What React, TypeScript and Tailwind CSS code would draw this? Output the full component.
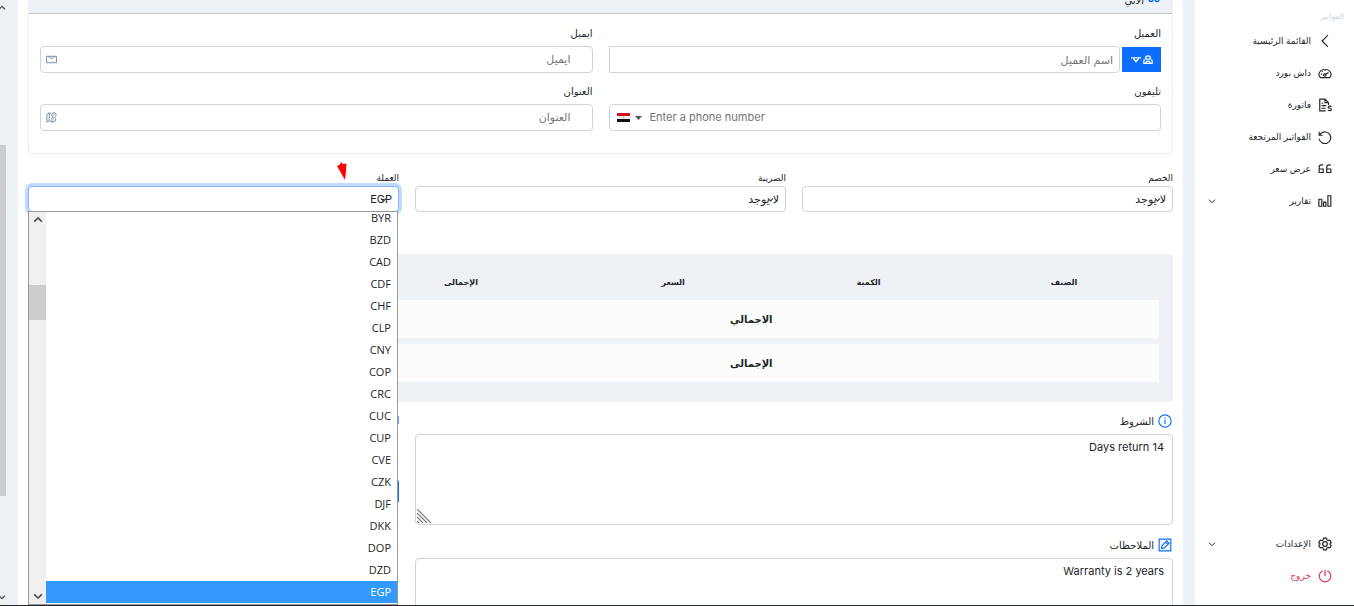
import type { ReactNode } from 'react'

const currencies = [
  'BYR', 'BZD', 'CAD', 'CDF', 'CHF', 'CLP', 'CNY', 'COP', 'CRC',
  'CUC', 'CUP', 'CVE', 'CZK', 'DJF', 'DKK', 'DOP', 'DZD', 'EGP'
]

const iconPaths = {
  back: <path d="M17 2 7 12l10 10" />,
  dashboard: (
    <>
      <path d="M4 20a10.500 8.500 0 1 1 16 0z" />
      <path d="m12 15 6-4M5 14h2M7 9l1 1M12 7v1.500" />
      <circle cx="11.500" cy="15.500" r="2" />
    </>
  ),
  invoice: (
    <>
      <path d="M13 22H3V2h9l6 6v4M12 2v6h6M6 9h3M6 13h8M6 17.500h7" />
      <path d="M23 15c-1-1.500-5.500-1.500-5.500.8 0 2.400 5.500 1.200 5.500 3.900 0 2.600-4.500 2.500-6 .8" />
    </>
  ),
  returns: <path d="M2 3v6h6M2.500 9 5 6a10 10 0 1 1-3 9" />,
  quote: (
    <>
      <path d="M9 5H6a4 4 0 0 0-4 4v9h7v-6H2" />
      <path d="M22 5h-3a4 4 0 0 0-4 4v9h7v-6h-7" />
    </>
  ),
  reports: <path d="M1.500 9h5v12h-5zM9.500 14h4v7h-4zM17 3h5v18h-5z" />,
  settings: (
    <>
      <path d="m9.500 2-.7 3.100-2 1.200-3-1L1.300 9.600 3.700 12l-2.400 2.400 2.500 4.300 3-1 2 1.200.7 3.100h5l.7-3.100 2-1.200 3 1 2.500-4.300L20.300 12l2.400-2.400-2.500-4.300-3 1-2-1.200-.7-3.100z" />
      <circle cx="12" cy="12" r="4" />
    </>
  ),
  power: <path d="M12 1.500V12M8 3a10 10 0 1 0 8 0" />,
  chevron: <path d="m3 8 9 9 9-9" />,
  up: <path d="m3 16 9-9 9 9" />,
  mail: <path d="M1 5h22v14H1zM6 5c1 6 11 6 12 0" />,
  map: (
    <>
      <path d="M12 4 7 2 2 5v17l5-3 6 3 8-3v-5M7 2v17M13 12v10" />
      <path d="M17 14c-3-3-4-5-4-8a4 4 0 0 1 9 0c0 3-2 5-5 8zM16 6h3" />
    </>
  ),
  info: (
    <>
      <circle cx="12" cy="12" r="10.500" />
      <path d="M12 10v7M12 6v2" />
    </>
  ),
  edit: <path d="M2 2h20v20H2zM6 18l1-5 8-8 4 4-8 8zM13 7l4 4" />,
  customer: (
    <>
      <path d="M6 10V8a6 6 0 0 1 12 0v2M6 10h12" />
      <path d="M4 11a4 4 0 0 0-2 4v5h20v-5a4 4 0 0 0-2-4M8 20v-5h8v5" />
    </>
  ),
  triangle: <path d="M0 7h24M6 9l6 7 6-7" />,
  people: (
    <>
      <circle cx="6" cy="15" r="4" />
      <circle cx="18" cy="15" r="4" />
      <path d="M6 11V5h3M18 11V5h-3M10 14h4" />
    </>
  )
}

type IconName = keyof typeof iconPaths

const Icon = ({ name, className = 'size-3.5 stroke-2' }: { name: IconName; className?: string }) => (
  <svg
    viewBox="0 0 24 24"
    fill="none"
    stroke="currentColor"
    className={`shrink-0 ${className}`}
    aria-hidden="true"
  >
    {iconPaths[name]}
  </svg>
)

const NavItem = ({ icon, label, expandable, danger }: {
  icon: IconName
  label: string
  expandable?: boolean
  danger?: boolean
}) => (
  <a
    href="#"
    className={`flex h-8 items-center gap-[7px] pr-[22px] pl-[13px] text-[9px] ${danger ? 'text-[#dc3557]' : 'text-[#212529]'}`}
  >
    <Icon name={icon} />
    <span className="flex-1 whitespace-nowrap">{label}</span>
    {expandable && <Icon name="chevron" className="size-2 stroke-3" />}
  </a>
)

const Field = ({ id, label, children }: { id: string; label: string; children: ReactNode }) => (
  <div className="flex flex-col gap-[6px]">
    <label htmlFor={id} className="text-[10px] leading-[13px]">{label}</label>
    {children}
  </div>
)

const IconInput = ({ id, icon, placeholder }: { id: string; icon: IconName; placeholder: string }) => (
  <div className="flex h-[27px] items-center rounded border border-[#ced4da] pr-[21px] pl-[5px]">
    <input
      id={id}
      type="text"
      placeholder={placeholder}
      className="min-w-0 flex-1 text-[11px] outline-none placeholder:text-[#757575]"
    />
    <Icon name={icon} className="size-[11px] stroke-2 text-[#6b83a0]" />
  </div>
)

const SelectField = ({ id, label, options, focused, children }: {
  id: string
  label: string
  options: string[]
  focused?: boolean
  children?: ReactNode
}) => (
  <div>
    <label htmlFor={id} className="block text-[9px] leading-[14px]">{label}</label>
    <div className="relative mt-px">
      <select
        id={id}
        defaultValue={options[options.length - 1]}
        className={`block h-[26px] w-full appearance-none rounded border bg-white px-1.5 text-[11px] outline-none ${
          focused ? 'border-[#86b7fe] ring-3 ring-[#c2dbfe]' : 'border-[#ced4da]'
        }`}
      >
        {options.map(option => <option key={option}>{option}</option>)}
      </select>
      <Icon name="chevron" className="pointer-events-none absolute top-2.5 right-3 size-[7px] stroke-4 text-[#343a40]" />
      {children}
    </div>
  </div>
)

const CurrencyList = () => (
  <div className="absolute top-[25px] right-px left-0 z-10 flex h-[394px] border border-[#999] bg-white">
    <ul
      role="listbox"
      aria-label="العملة"
      className="flex flex-1 flex-col justify-end overflow-hidden pb-px font-['Open_Sans',sans-serif] text-[11px]"
    >
      {currencies.map(code => (
        <li
          key={code}
          role="option"
          aria-selected={code === 'EGP'}
          className="h-[22px] shrink-0 px-1.5 leading-[22px] aria-selected:bg-[#3399ff] aria-selected:text-white"
        >
          {code}
        </li>
      ))}
    </ul>
    <div className="flex w-[17px] flex-col items-center bg-[#f0f0f0] text-[#505050]">
      <Icon name="up" className="my-[3px] size-2.5 stroke-4" />
      <div className="mt-[57px] h-[35px] w-full bg-[#cdcdcd]" />
      <Icon name="chevron" className="mt-auto mb-[3px] size-2.5 stroke-4" />
    </div>
  </div>
)

const NoteBox = ({ id, icon, label, text }: { id: string; icon: IconName; label: string; text: string }) => (
  <div>
    <label htmlFor={id} className="flex h-[26px] items-center gap-1 pr-px text-[10px]">
      <Icon name={icon} className="size-3.5 stroke-2 text-[#0d6efd]" />
      {label}
    </label>
    <div className="relative">
      <textarea
        id={id}
        defaultValue={text}
        className="block h-[91px] w-full resize-none rounded border border-[#ced4da] px-2 py-1 text-[11px] leading-4 outline-none"
      />
      <svg viewBox="0 0 14 14" className="absolute bottom-0.5 left-0.5 size-3.5" stroke="#777" strokeWidth="1.2" aria-hidden="true">
        <path d="M0 0 14 14M0 4 10 14M0 8 6 14M0 12 2 14" />
      </svg>
    </div>
  </div>
)

export default function App() {
  return (
    <div
      dir="rtl"
      className="flex h-screen flex-col overflow-hidden bg-[#eef2f6] font-['Inter','DejaVu_Sans',sans-serif] text-[#212529]"
    >
      <div className="flex min-h-0 flex-1">
        <aside className="flex w-[159px] shrink-0 flex-col bg-white pb-[13px]">
          <h2 className="h-[25px] pt-2.5 pr-2.5 text-[8px] leading-3 text-[#ccd6e2]">الفواتير</h2>
          <nav className="flex flex-1 flex-col">
            <NavItem icon="back" label="القائمة الرئيسية" />
            <NavItem icon="dashboard" label="داش بورد" />
            <NavItem icon="invoice" label="فاتورة" />
            <NavItem icon="returns" label="الفواتير المرتجعة" />
            <NavItem icon="quote" label="عرض سعر" />
            <NavItem icon="reports" label="تقارير" expandable />
            <div className="flex-1" />
            <NavItem icon="settings" label="الإعدادات" expandable />
            <NavItem icon="power" label="خروج" danger />
          </nav>
        </aside>

        <main className="mx-3 min-w-0 flex-1 overflow-hidden bg-white px-2.5">
          <section className="rounded-b border border-t-0 border-[#eceef0]">
            <h3 className="flex h-3.5 items-end gap-1 overflow-hidden border-b border-[#c3c6c9] bg-[#eef2f6] px-3 pb-[5px] text-[10px] leading-4 font-medium">
              <Icon name="people" className="mb-1 size-3 stroke-3 text-[#0d6efd]" />
              الآتي
            </h3>
            <div className="grid grid-cols-2 gap-x-4 gap-y-3 px-[11px] pt-[13px] pb-[22px]">
              <Field id="client" label="العميل">
                <div className="flex h-[27px] items-center gap-0.5">
                  <button
                    type="button"
                    aria-label="العميل"
                    className="flex h-[25px] w-[39px] items-center justify-center gap-0.5 bg-[#0d6efd] text-white"
                  >
                    <Icon name="customer" className="size-2.5 stroke-3" />
                    <Icon name="triangle" className="size-2.5 stroke-3" />
                  </button>
                  <input
                    id="client"
                    type="text"
                    placeholder="اسم العميل"
                    className="h-full min-w-0 flex-1 rounded-r border border-[#ced4da] px-1.5 text-[11px] outline-none placeholder:text-[#757575]"
                  />
                </div>
              </Field>
              <Field id="email" label="ايميل">
                <IconInput id="email" icon="mail" placeholder="ايميل" />
              </Field>
              <Field id="phone" label="تليفون">
                <div dir="ltr" className="flex h-[27px] items-center rounded border border-[#ced4da] px-[7px]">
                  <button type="button" aria-label="مصر" className="flex items-center gap-[5px]">
                    <svg viewBox="0 0 13 9" className="h-[9px] w-[13px]" aria-hidden="true">
                      <path fill="#ce1126" d="M0 0h13v3H0z" />
                      <path fill="#f4f4f4" d="M0 3h13v3H0z" />
                      <path fill="#111" d="M0 6h13v3H0z" />
                      <path fill="#d9b65a" d="M6 3.500h1.200v2H6z" />
                    </svg>
                    <svg viewBox="0 0 7 4" className="h-1 w-[7px]" aria-hidden="true">
                      <path fill="#555" d="M0 0h7L3.500 4z" />
                    </svg>
                  </button>
                  <input
                    id="phone"
                    type="tel"
                    placeholder="Enter a phone number"
                    className="ml-2 min-w-0 flex-1 text-[11px] outline-none placeholder:text-[#757575]"
                  />
                </div>
              </Field>
              <Field id="address" label="العنوان">
                <IconInput id="address" icon="map" placeholder="العنوان" />
              </Field>
            </div>
          </section>

          <section className="mt-[17px] grid grid-cols-3 gap-4">
            <SelectField id="discount" label="الخصم" options={['لا يوجد']} />
            <SelectField id="tax" label="الضريبة" options={['لا يوجد']} />
            <SelectField id="currency" label="العملة" options={currencies} focused>
              <svg viewBox="0 0 10 18" className="absolute -top-6 right-[52px] h-[18px] w-2.5" aria-hidden="true">
                <path fill="#f00" d="M0 4 3 2.500 4 0l2 2 3.500-.5L9 9 8 18z" />
              </svg>
              <CurrencyList />
            </SelectField>
          </section>

          <section className="mt-[42px] rounded bg-[#eef2f6] px-3.5 pt-2.5 pb-3.5">
            <table className="w-full table-fixed border-separate border-spacing-x-0 border-spacing-y-1.5 text-center">
              <thead className="text-[8px]">
                <tr className="h-6">
                  <th className="w-[17%] p-0">الصنف</th>
                  <th className="w-[18%] p-0">الكمية</th>
                  <th className="w-[17%] p-0">السعر</th>
                  <th className="w-[21%] p-0">الإجمالى</th>
                  <th className="p-0" />
                </tr>
              </thead>
              <tbody className="text-[10px]">
                <tr className="h-[38px] bg-[#fcfcfc]">
                  <th colSpan={4} className="p-0">الاجمالي</th>
                  <td />
                </tr>
                <tr className="h-[38px] bg-[#fcfcfc]">
                  <th colSpan={4} className="p-0">الإجمالى</th>
                  <td />
                </tr>
              </tbody>
            </table>
          </section>

          <section className="mt-1.5 grid grid-cols-3 gap-4">
            <div className="col-span-2 flex flex-col gap-[7px]">
              <NoteBox id="terms" icon="info" label="الشروط" text="Days return 14" />
              <NoteBox id="notes" icon="edit" label="الملاحظات" text="Warranty is 2 years" />
            </div>
            <div className="pt-2">
              <div className="h-2 bg-[#6ea8fe]" />
              <div className="mt-14 h-[23px] rounded-xs bg-[#0d6efd]" />
            </div>
          </section>
        </main>

        <div className="flex w-1.5 shrink-0 flex-col overflow-hidden bg-[#f0f0f0] text-[#505050]">
          <div className="h-[24%] pt-1">
            <Icon name="up" className="size-2 stroke-4" />
          </div>
          <div className="h-[58%] bg-[#cdcdcd]" />
          <Icon name="chevron" className="mt-auto mb-1 size-2 stroke-4" />
        </div>
      </div>
      <div className="h-px shrink-0 bg-[#20252b]" />
    </div>
  )
}
